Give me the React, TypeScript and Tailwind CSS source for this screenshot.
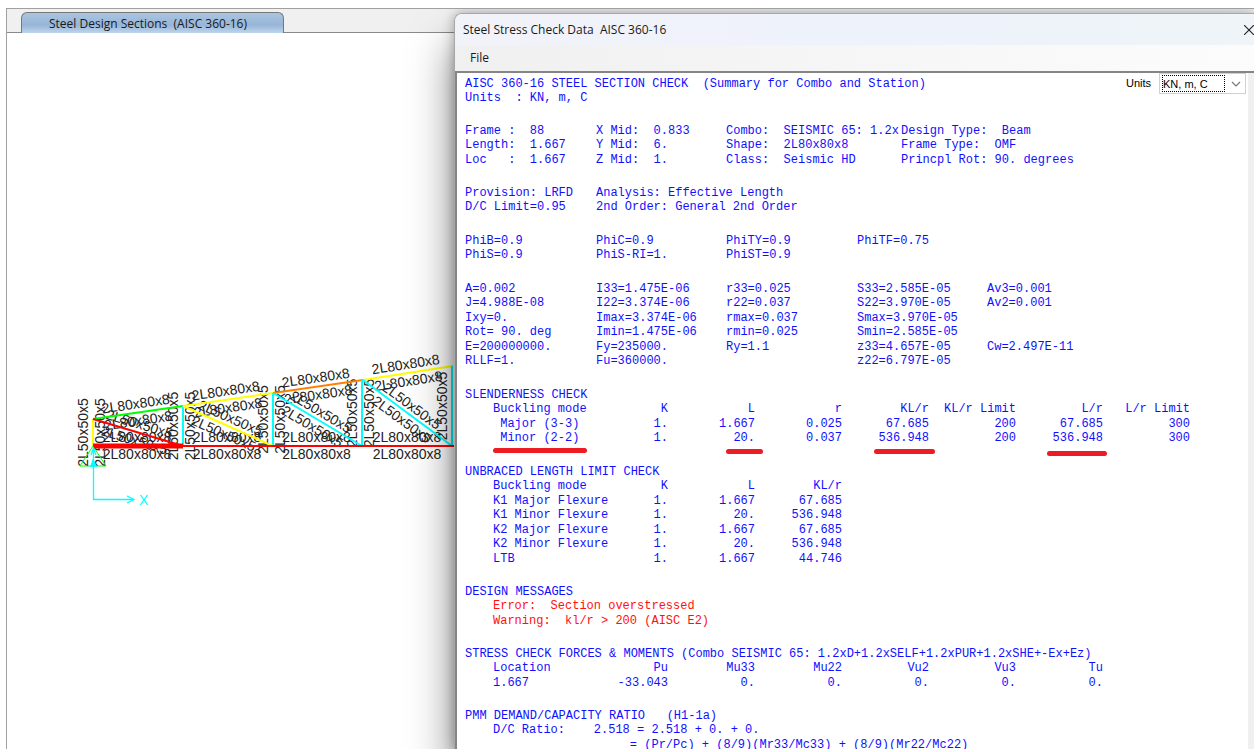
// ============================================================
// Steel design workspace: the truss canvas sits behind, and the
// stress check dialog for the selected frame floats over it.
// ============================================================

type Member = {
  from: [number, number];
  to: [number, number];
  color: string;
  section: string;
  width?: number;
  oneSided?: boolean;
};

const CHORD = "2L80x80x8";
const WEB = "2L50x50x5";

// Vertical members run upwards so that their labels read upwards too.
const members: Member[] = [
  { from: [93, 419], to: [183, 406], color: "#00ff00", section: CHORD },
  { from: [183, 406], to: [273, 393], color: "#ffff00", section: CHORD },
  { from: [273, 393], to: [363, 380], color: "#ff8000", section: CHORD },
  { from: [363, 380], to: [453, 366], color: "#ffff00", section: CHORD },
  { from: [93, 446], to: [93, 419], color: "#ffff00", section: WEB },
  { from: [183, 446], to: [183, 406], color: "#00ffff", section: WEB },
  { from: [273, 446], to: [273, 393], color: "#00ffff", section: WEB },
  { from: [362, 446], to: [362, 380], color: "#00ffff", section: WEB },
  { from: [452, 446], to: [452, 366], color: "#00ffff", section: WEB, oneSided: true },
  { from: [93, 419], to: [183, 446], color: "#ff0000", section: WEB },
  { from: [183, 406], to: [273, 446], color: "#ffff00", section: WEB },
  { from: [273, 393], to: [362, 446], color: "#00ffff", section: WEB },
  { from: [363, 380], to: [452, 446], color: "#00ffff", section: WEB },
  { from: [183, 446], to: [273, 446], color: "#ff0000", section: CHORD },
  { from: [273, 446], to: [362, 446], color: "#ff0000", section: CHORD },
  { from: [362, 446], to: [454, 446], color: "#ff0000", section: CHORD },
  { from: [93, 446], to: [183, 446], color: "#ff0000", section: CHORD, width: 5 },
];

// Each member carries its section name on both sides of the line.
function MemberLabel({ member }: { member: Member }) {
  const [x1, y1] = member.from;
  const [x2, y2] = member.to;
  const cx = (x1 + x2) / 2 - 1;
  const cy = (y1 + y2) / 2;
  const angle = (Math.atan2(y2 - y1, x2 - x1) * 180) / Math.PI;
  return (
    <g transform={`translate(${cx} ${cy}) rotate(${angle})`}>
      <text y="-4" textAnchor="middle">{member.section}</text>
      {!member.oneSided && <text y="13" textAnchor="middle">{member.section}</text>}
    </g>
  );
}

function Truss() {
  return (
    <svg
      viewBox="7 33 448 716"
      className="h-[716px] w-[448px] shrink-0 font-['Liberation_Sans',sans-serif] text-[14px]"
      role="img"
      aria-label="Truss elevation"
    >
      <g fill="#222">
        {members.map((m, i) => (
          <MemberLabel key={i} member={m} />
        ))}
      </g>
      <path d="M93 446L80 466H106Z" fill="none" stroke="#00ff00" />
      {members.map((m, i) => (
        <line
          key={i}
          x1={m.from[0]}
          y1={m.from[1]}
          x2={m.to[0]}
          y2={m.to[1]}
          stroke={m.color}
          strokeWidth={m.width ?? 2}
        />
      ))}
      <path
        d="M93.500 449V499.500H133M127 496L134 499.500L127 503M91 455L93.500 448L96 455"
        fill="none"
        stroke="#00ffff"
        strokeWidth="1.3"
      />
      <path d="M93 458L97 467H90Z" fill="#00ffff" />
      <text x="139" y="505" fill="#00ffff">X</text>
    </svg>
  );
}

const frameInfo = [
  ["Frame :  88", "X Mid:  0.833", "Combo:  SEISMIC 65: 1.2x", "Design Type:  Beam"],
  ["Length:  1.667", "Y Mid:  6.", "Shape:  2L80x80x8", "Frame Type:  OMF"],
  ["Loc   :  1.667", "Z Mid:  1.", "Class:  Seismic HD", "Princpl Rot: 90. degrees"],
];

const provisions = [
  ["Provision: LRFD", "Analysis: Effective Length"],
  ["D/C Limit=0.95", "2nd Order: General 2nd Order"],
];

const phiFactors = [
  ["PhiB=0.9", "PhiC=0.9", "PhiTY=0.9", "PhiTF=0.75"],
  ["PhiS=0.9", "PhiS-RI=1.", "PhiST=0.9"],
];

const properties = [
  ["A=0.002", "I33=1.475E-06", "r33=0.025", "S33=2.585E-05", "Av3=0.001"],
  ["J=4.988E-08", "I22=3.374E-06", "r22=0.037", "S22=3.970E-05", "Av2=0.001"],
  ["Ixy=0.", "Imax=3.374E-06", "rmax=0.037", "Smax=3.970E-05"],
  ["Rot= 90. deg", "Imin=1.475E-06", "rmin=0.025", "Smin=2.585E-05"],
  ["E=200000000.", "Fy=235000.", "Ry=1.1", "z33=4.657E-05", "Cw=2.497E-11"],
  ["RLLF=1.", "Fu=360000.", "", "z22=6.797E-05"],
];

const slenderness = {
  head: ["Buckling mode", "K", "L", "r", "KL/r", "KL/r Limit", "L/r", "L/r Limit"],
  rows: [
    [" Major (3-3)", "1.", "1.667", "0.025", "67.685", "200", "67.685", "300"],
    [" Minor (2-2)", "1.", "20.", "0.037", "536.948", "200", "536.948", "300"],
  ],
};

const unbraced = {
  head: ["Buckling mode", "K", "L", "KL/r"],
  rows: [
    ["K1 Major Flexure", "1.", "1.667", "67.685"],
    ["K1 Minor Flexure", "1.", "20.", "536.948"],
    ["K2 Major Flexure", "1.", "1.667", "67.685"],
    ["K2 Minor Flexure", "1.", "20.", "536.948"],
    ["LTB", "1.", "1.667", "44.746"],
  ],
};

const forces = {
  head: ["Location", "Pu", "Mu33", "Mu22", "Vu2", "Vu3", "Tu"],
  rows: [["1.667", "-33.043", "0.", "0.", "0.", "0.", "0."]],
};

// Red marker strokes under the governing slenderness values, by column.
const markers: Record<number, string> = {
  0: "left-0 top-[17px] w-[94px]",
  2: "-right-2 top-[18px] w-[37px]",
  4: "-right-1.5 top-[18px] w-[61px]",
  6: "-right-1 top-5 w-[60px]",
};

const columnWidths = ["w-[118px]", "w-[57px]"];

function Grid({ rows, wide = false }: { rows: string[][]; wide?: boolean }) {
  const columns = wide
    ? "grid-cols-[131px_130px_175px_auto]"
    : "grid-cols-[131px_130px_131px_130px_auto]";
  return (
    <section>
      {rows.map((row, i) => (
        <div key={i} className={`grid odd:h-[14px] even:h-[15px] ${columns}`}>
          {row.map((cell, j) => (
            <span key={j}>{cell}</span>
          ))}
        </div>
      ))}
    </section>
  );
}

type TableProps = {
  title: string;
  head: string[];
  rows: string[][];
  markedRow?: number;
};

function ReportTable({ title, head, rows, markedRow }: TableProps) {
  return (
    <section>
      <h2 className="h-[14px]">{title}</h2>
      <table className="ml-7 border-collapse">
        <colgroup>
          {head.map((h, i) => (
            <col key={h} className={columnWidths[i] ?? "w-[87px]"} />
          ))}
        </colgroup>
        <thead>
          <tr className="h-[15px]">
            {head.map((h) => (
              <th key={h} scope="col" className="p-0 text-right align-top font-normal first:text-left">
                {h}
              </th>
            ))}
          </tr>
        </thead>
        <tbody>
          {rows.map((row, r) => (
            <tr key={r} className="odd:h-[14px] even:h-[15px]">
              {row.map((cell, c) => (
                <td key={c} className="relative p-0 text-right align-top first:text-left">
                  {cell}
                  {r === markedRow && markers[c] && (
                    <span className={`absolute h-[5px] rounded-sm bg-[#ed1c24] ${markers[c]}`} />
                  )}
                </td>
              ))}
            </tr>
          ))}
        </tbody>
      </table>
    </section>
  );
}

function UnitsPicker() {
  return (
    <div className="flex items-start gap-2 pr-[2px] font-['Liberation_Sans',sans-serif] text-[11px] text-black">
      <label htmlFor="units" className="pt-[3px]">Units</label>
      <div className="flex h-[21px] items-center border border-[#d0d0d0] bg-white pl-[2px]">
        <select
          id="units"
          defaultValue="kn"
          className="h-[17px] w-[63px] appearance-none border border-dotted border-black leading-[14px] outline-none"
        >
          <option value="kn">KN, m, C</option>
        </select>
        <svg viewBox="0 0 20 16" className="h-4 w-5" fill="none" aria-hidden="true">
          <path d="M7 6L11 10L15 6" stroke="#777" strokeWidth="1.2" />
        </svg>
      </div>
    </div>
  );
}

function Report() {
  return (
    <div className="flex min-w-0 flex-1 flex-col gap-[19px] overflow-hidden whitespace-pre bg-white pl-2 font-['Liberation_Mono',monospace] text-[12px] leading-[14px] text-[#1010ff]">
      <header className="flex h-8 shrink-0 justify-between">
        <div className="pt-1">
          <h1 className="h-[14px]">AISC 360-16 STEEL SECTION CHECK  (Summary for Combo and Station)</h1>
          <p className="h-[15px]">Units  : KN, m, C</p>
        </div>
        <UnitsPicker />
      </header>
      <Grid rows={frameInfo} wide />
      <Grid rows={provisions} />
      <Grid rows={phiFactors} />
      <Grid rows={properties} />
      <ReportTable title="SLENDERNESS CHECK" {...slenderness} markedRow={1} />
      <ReportTable title="UNBRACED LENGTH LIMIT CHECK" {...unbraced} />
      <section>
        <h2 className="h-[14px]">DESIGN MESSAGES</h2>
        <div className="ml-7 text-[#ff1010]">
          <p className="h-[15px]">Error:  Section overstressed</p>
          <p className="h-[14px]">{"Warning:  kl/r > 200 (AISC E2)"}</p>
        </div>
      </section>
      <ReportTable
        title="STRESS CHECK FORCES & MOMENTS (Combo SEISMIC 65: 1.2xD+1.2xSELF+1.2xPUR+1.2xSHE+-Ex+Ez)"
        {...forces}
      />
      <section>
        <h2 className="h-[14px]">PMM DEMAND/CAPACITY RATIO   (H1-1a)</h2>
        <div className="ml-7">
          <p className="h-[15px]">D/C Ratio:    2.518 = 2.518 + 0. + 0.</p>
          <p className="h-[14px]">{"                   = (Pr/Pc) + (8/9)(Mr33/Mc33) + (8/9)(Mr22/Mc22)"}</p>
        </div>
      </section>
    </div>
  );
}

function StressCheckDialog() {
  return (
    <div
      role="dialog"
      aria-label="Steel Stress Check Data"
      className="absolute top-1 right-0 bottom-0 left-[447px] flex flex-col overflow-hidden rounded-tl-lg border-t border-l border-[#a8a8a8] shadow-[0_30px_44px_rgba(0,0,0,0.5),0_0_12px_rgba(0,0,0,0.3)]"
    >
      <div className="flex h-[31px] shrink-0 items-center justify-between bg-linear-to-r from-[#f2f3f9] via-[#eef2fb] to-[#eef4f8] pl-2">
        <span className="whitespace-pre">Steel Stress Check Data  AISC 360-16</span>
        <button type="button" aria-label="Close">
          <svg viewBox="0 0 10 10" className="size-[10px]" fill="none">
            <path d="M0 0L10 10M10 0L0 10" stroke="#222" strokeWidth="1.1" />
          </svg>
        </button>
      </div>
      <div className="flex h-[26px] shrink-0 items-center bg-linear-to-r from-[#f0f0f0] to-[#fcfcfc] pl-[15px]">
        <button type="button">File</button>
      </div>
      <div className="flex min-h-0 flex-1 border-t-2 border-l-2 border-[#858585]">
        <Report />
        <div className="w-[6px] shrink-0 bg-[#f0f0f0]" />
      </div>
    </div>
  );
}

export default function App() {
  return (
    <div className="h-screen bg-white pt-2 pr-1 pb-[3px] pl-1.5 font-['Open_Sans',sans-serif] text-[12px] text-[#1a1a1a]">
      <main className="relative flex h-full flex-col overflow-hidden border-t border-l border-[#a0a0a0]">
        <div className="flex h-6 shrink-0 items-end border-b border-[#8a8a8a] bg-[#f0f0f0] pl-[14px]">
          <button
            type="button"
            className="-mb-px h-[21px] w-[263px] rounded-t-md border border-b-0 border-[#777] bg-linear-to-b from-[#a9c5e2] via-[#98b5d6] via-60% to-[#bdd5ee] pl-[27px] text-left leading-[19px] whitespace-pre"
          >
            Steel Design Sections  (AISC 360-16)
          </button>
        </div>
        <Truss />
        <StressCheckDialog />
      </main>
    </div>
  );
}
